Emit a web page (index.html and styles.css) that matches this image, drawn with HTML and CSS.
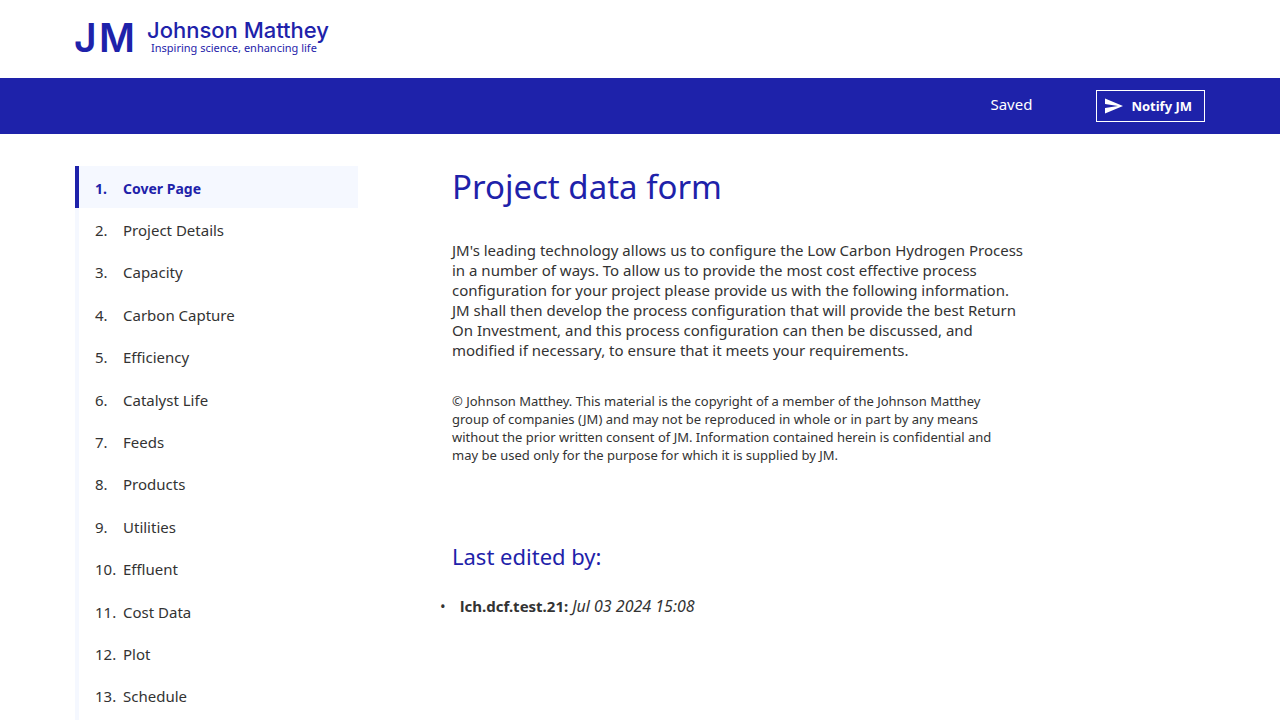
FILE: index.html
```html
<!DOCTYPE html>
<html lang="en">
<head>
<meta charset="utf-8">
<meta name="viewport" content="width=device-width, initial-scale=1">
<title>Project data form</title>
<link rel="stylesheet" href="styles.css">
</head>
<body>
<header class="masthead">
  <a class="logo" href="#" aria-label="Johnson Matthey home">
    <svg width="260" height="40" viewBox="0 0 260 40" fill="currentColor" aria-hidden="true">
      <text class="logo-mark" x="-1" y="33">J<tspan x="24">M</tspan></text>
      <text class="logo-name" x="72" y="19">Johnson Matthey</text>
      <text class="logo-tag" x="76" y="33">Inspiring science, enhancing life</text>
    </svg>
  </a>
</header>
<div class="toolbar">
  <span class="status">Saved</span>
  <button class="notify" type="button">
    <svg width="18" height="16" viewBox="0 0 18 16" fill="currentColor" aria-hidden="true"><path d="M0 0.500 18 8 0 15.500V10L13 8 0 6Z"/></svg>
    Notify JM
  </button>
</div>
<div class="layout">
  <nav class="sidebar" aria-label="Form sections">
    <ol class="steps">
      <li><a class="step current" href="#" aria-current="page"><span>1.</span>Cover Page</a></li>
      <li><a class="step" href="#"><span>2.</span>Project Details</a></li>
      <li><a class="step" href="#"><span>3.</span>Capacity</a></li>
      <li><a class="step" href="#"><span>4.</span>Carbon Capture</a></li>
      <li><a class="step" href="#"><span>5.</span>Efficiency</a></li>
      <li><a class="step" href="#"><span>6.</span>Catalyst Life</a></li>
      <li><a class="step" href="#"><span>7.</span>Feeds</a></li>
      <li><a class="step" href="#"><span>8.</span>Products</a></li>
      <li><a class="step" href="#"><span>9.</span>Utilities</a></li>
      <li><a class="step" href="#"><span>10.</span>Effluent</a></li>
      <li><a class="step" href="#"><span>11.</span>Cost Data</a></li>
      <li><a class="step" href="#"><span>12.</span>Plot</a></li>
      <li><a class="step" href="#"><span>13.</span>Schedule</a></li>
    </ol>
  </nav>
  <main class="content">
    <h1>Project data form</h1>
    <p class="intro">JM's leading technology allows us to configure the Low Carbon Hydrogen Process<br>in a number of ways. To allow us to provide the most cost effective process<br>configuration for your project please provide us with the following information.<br>JM shall then develop the process configuration that will provide the best Return<br>On Investment, and this process configuration can then be discussed, and<br>modified if necessary, to ensure that it meets your requirements.</p>
    <p class="legal">© Johnson Matthey. This material is the copyright of a member of the Johnson Matthey<br>group of companies (JM) and may not be reproduced in whole or in part by any means<br>without the prior written consent of JM. Information contained herein is confidential and<br>may be used only for the purpose for which it is supplied by JM.</p>
    <h2>Last edited by:</h2>
    <ul class="edits">
      <li><strong>lch.dcf.test.21:</strong> <em>Jul 03 2024 15:08</em></li>
    </ul>
  </main>
</div>
</body>
</html>
```
FILE: styles.css
```css
* { box-sizing: border-box; }
body {
  margin: 0;
  background: #fff;
  color: #333;
  font: 15px/20px "Noto Sans", sans-serif;
  overflow-x: hidden;
}
h1, h2, p, ul, ol { margin: 0; padding: 0; font-weight: 400; }
.masthead { padding: 19px 75px; }
.logo { display: block; width: 260px; color: #1e22aa; }
.logo svg { display: block; overflow: visible; }
.logo-mark { font: 600 39px Inter, sans-serif; }
.logo-name { font: 500 22px Inter, sans-serif; }
.logo-tag { font: 400 11px "Noto Sans", sans-serif; }
.toolbar {
  display: flex;
  align-items: center;
  justify-content: flex-end;
  gap: 64px;
  height: 56px;
  padding: 0 75px;
  background: #1e22aa;
  color: #fff;
}
.status { font-size: 15px; padding-bottom: 4px; }
.notify {
  display: flex;
  align-items: center;
  gap: 8px;
  height: 32px;
  padding: 0 12px 0 8px;
  border: 1px solid #fff;
  background: none;
  color: inherit;
  font: 700 13px/20px "Noto Sans", sans-serif;
}
.layout {
  display: grid;
  grid-template-columns: 283px minmax(0, 1fr);
  column-gap: 94px;
  padding: 32px 75px 0;
}
.steps {
  display: grid;
  grid-auto-rows: 1fr;
  min-height: 551px;
  list-style: none;
}
.steps li { display: grid; }
.step {
  display: flex;
  align-items: center;
  padding: 1px 16px 0;
  border-left: 4px solid #f5f8ff;
  color: #333;
  text-decoration: none;
}
.step span { width: 28px; flex-shrink: 0; }
.current { padding-top: 3px; border-color: #1e22aa; background: #f5f8ff; color: #1e22aa; font-weight: 700; font-size: 14px; }
.sidebar { padding-bottom: 32px; background: linear-gradient(#f5f8ff, #f5f8ff) left / 4px 100% no-repeat; }
h1 { color: #1e22aa; font-size: 33px; line-height: 42px; }
.intro { margin-top: 32px; }
.legal { margin-top: 32px; font-size: 13px; line-height: 18px; }
h2 { margin-top: 76px; color: #1e22aa; font-size: 22px; line-height: 32px; }
.edits { margin-top: 24px; padding-left: 8px; list-style: none; }
.edits li::before { content: "•"; display: inline-block; width: 20px; margin-left: -20px; }
.edits em { font-size: 16px; }
```
